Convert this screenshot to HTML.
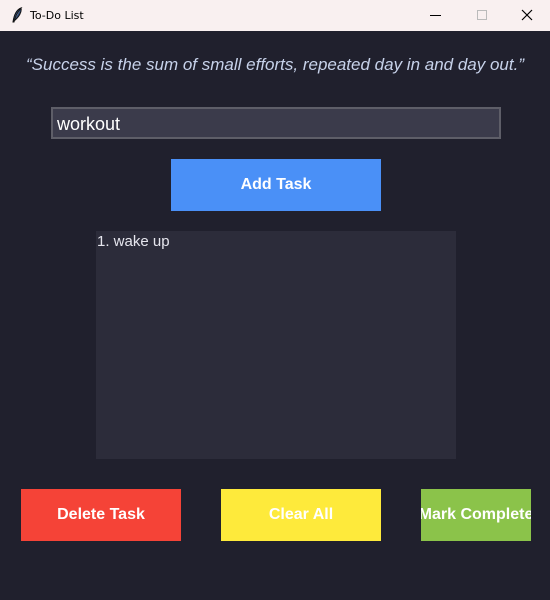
<!DOCTYPE html>
<html><head><style>
*{margin:0;padding:0;box-sizing:border-box}
body{width:550px;height:600px;background:#20202d;font-family:"Liberation Sans",Arial,Helvetica,sans-serif;position:relative;overflow:hidden}
.tb{position:absolute;left:0;top:0;width:550px;height:31px;background:#f9f0f0;color:#000;font-size:12px}
.tb .t{position:absolute;left:30px;top:9px;font-family:"DejaVu Sans","Liberation Sans",sans-serif;font-size:11px}
.q{position:absolute;left:0;width:550px;top:55px;text-align:center;font-style:italic;font-size:17px;color:#c7d2ea}
.in{position:absolute;left:51px;top:107px;width:450px;height:32px;background:#3b3b4b;border:2px solid #5e5e68;color:#fff;font-size:18px;padding:5px 0 0 4px}
.b{position:absolute;color:#fff;font-weight:bold;font-size:16px;display:flex;align-items:center;justify-content:center;white-space:nowrap;overflow:hidden}
.lb{position:absolute;left:96px;top:231px;width:360px;height:228px;background:#2c2c3a;color:#e6e6ee;font-size:15px;padding:2px 0 0 1px}
</style></head><body>
<div class="tb">
<svg style="position:absolute;left:11px;top:7px" width="12" height="17" viewBox="0 0 12 17"><path d="M10 1 C5 3 3 8 2 15 L3 15 C4 10 6 6 10 1Z M10 1 C11 5 8 10 3 14" fill="#2c4a7a" stroke="#111" stroke-width="1"/></svg>
<span class="t">To-Do List</span>
<div style="position:absolute;left:430px;top:15px;width:11px;height:1px;background:#000"></div>
<div style="position:absolute;left:477px;top:10px;width:10px;height:10px;border:1px solid #bbb"></div>
<svg style="position:absolute;left:521px;top:9px" width="12" height="12"><path d="M1 1L11 11M11 1L1 11" stroke="#000" stroke-width="1.2"/></svg>
</div>
<div class="q">“Success is the sum of small efforts, repeated day in and day out.”</div>
<div class="in">workout</div>
<div class="b" style="left:171px;top:159px;width:210px;height:52px;background:#4a90f7">Add Task</div>
<div class="lb">1. wake up</div>
<div class="b" style="left:21px;top:489px;width:160px;height:52px;background:#f54337">Delete Task</div>
<div class="b" style="left:221px;top:489px;width:160px;height:52px;background:#feea3b">Clear All</div>
<div class="b" style="left:421px;top:489px;width:110px;height:52px;background:#8bc34a">Mark Complete</div>
</body></html>
